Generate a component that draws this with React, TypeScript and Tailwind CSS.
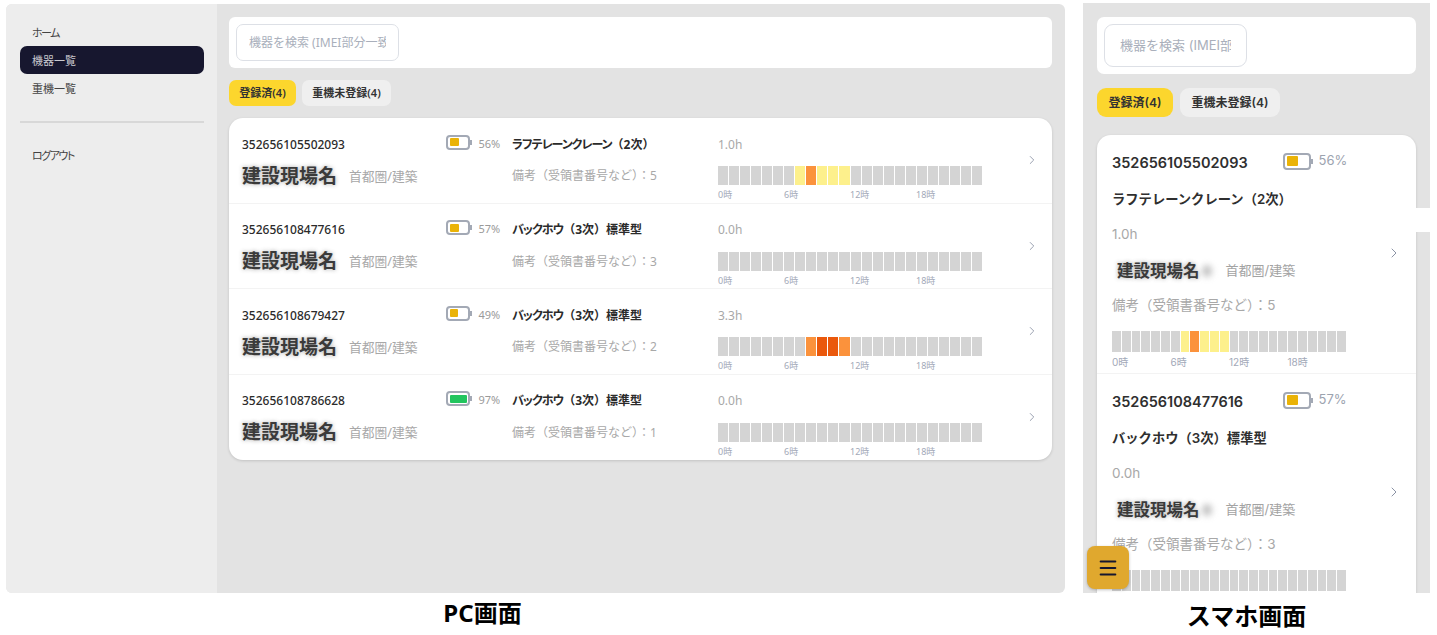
import { ChevronRight, Menu } from "lucide-react";

const PC_FONT = "[font-family:'Noto_Sans','Noto_Sans_CJK_JP',sans-serif]";
const SP_FONT = "[font-family:Inter,'Noto_Sans_CJK_JP',sans-serif]";

type Machine = {
  imei: string;
  battery: number;
  model: string;
  note: number;
  hours: string;
  heat: Record<number, string>;
};

const Y = "bg-[#fdf08c]";
const O = "bg-[#fb923c]";
const D = "bg-[#ea580c]";

const machines: Machine[] = [
  { imei: "352656105502093", battery: 56, model: "ラフテレーンクレーン（2次）", note: 5, hours: "1.0h", heat: { 7: Y, 8: O, 9: Y, 10: Y, 11: Y } },
  { imei: "352656108477616", battery: 57, model: "バックホウ（3次）標準型", note: 3, hours: "0.0h", heat: {} },
  { imei: "352656108679427", battery: 49, model: "バックホウ（3次）標準型", note: 2, hours: "3.3h", heat: { 8: O, 9: D, 10: D, 11: O } },
  { imei: "352656108786628", battery: 97, model: "バックホウ（3次）標準型", note: 1, hours: "0.0h", heat: {} },
];

function Battery({ level, large }: { level: number; large?: boolean }) {
  const fill = level > 90 ? "bg-[#22c55e]" : "bg-[#eab308]";
  return (
    <div className="flex items-center">
      <div className={`rounded-[4px] border-2 border-[#a3a9b5] bg-white p-[1.5px] ${large ? "h-[17px] w-[28px]" : "h-[15px] w-[24px]"}`}>
        <div className={`h-full rounded-[1px] ${fill}`} style={{ width: `${level > 90 ? 100 : level}%` }} />
      </div>
      <div className="h-[5px] w-[1.5px] bg-[#a3a9b5]" />
    </div>
  );
}

function HeatBar({ heat, large, labels = true }: { heat: Record<number, string>; large?: boolean; labels?: boolean }) {
  return (
    <div className={large ? "w-[234px]" : "w-[264px]"}>
      <div className={`grid grid-cols-24 gap-x-[1px] ${large ? "h-[21px]" : "h-[19px]"}`}>
        {Array.from({ length: 24 }, (_, i) => (
          <div key={i} className={heat[i] ?? "bg-[#d4d4d4]"} />
        ))}
      </div>
      {labels && (
        <div className={`grid grid-cols-4 text-[#a3a9b8] ${large ? "mt-[3px] text-[10px] leading-[14px]" : "mt-[4px] text-[9px] leading-[11px]"}`}>
          <span>0時</span>
          <span>6時</span>
          <span>12時</span>
          <span>18時</span>
        </div>
      )}
    </div>
  );
}

function SiteName({ large }: { large?: boolean }) {
  return (
    <span className="flex items-center">
      <span className={`font-bold text-[#3a3a3a] [text-shadow:0_0_4px_rgba(60,60,60,0.45)] ${large ? "text-[16.5px]" : "text-[19px]"}`}>建設現場名</span>
      {large && <span className="ml-[2px] h-[12px] w-[10px] rounded-full bg-[#c4c4c4] blur-[3px]" />}
    </span>
  );
}

// kana in the PC view is set tight, brackets and kanji stay full width
function ModelName({ name }: { name: string }) {
  return (
    <>
      {name.split(/([ァ-ヶー]+)/).map((part, i) =>
        i % 2 === 1 ? (
          <span key={i} className="tracking-[-1px] [font-feature-settings:'palt']">{part}</span>
        ) : (
          <span key={i}>{part}</span>
        ),
      )}
    </>
  );
}

function PcRow({ m, last }: { m: Machine; last: boolean }) {
  return (
    <div className={`flex h-[85.5px] pl-[13px] ${last ? "" : "border-b border-[#f3f3f3]"}`}>
      <div className="w-[204px] pt-[16.5px]">
        <div className="text-[12px] leading-[20px] font-medium text-[#2b2b2b]">{m.imei}</div>
        <div className="mt-[8px] flex items-center gap-[12px] leading-[26px]">
          <SiteName />
          <span className="text-[12.75px] text-[#a8a8a8]">首都圏/建築</span>
        </div>
      </div>
      <div className="flex w-[66px] items-start gap-[7px] pt-[16.5px]">
        <Battery level={m.battery} />
        <span className="text-[11px] leading-[17px] text-[#9a9a9a]">{m.battery}%</span>
      </div>
      <div className="w-[206px] pt-[16.5px]">
        <div className="text-[12px] leading-[20px] font-bold text-[#2b2b2b]">
          <ModelName name={m.model} />
        </div>
        <div className="mt-[11.5px] text-[12px] leading-[20px] text-[#a8a8a8]">備考（受領書番号など）：{m.note}</div>
      </div>
      <div className="w-[264px] pt-[17.5px]">
        <div className="text-[12px] leading-[18px] text-[#a8a8a8]">{m.hours}</div>
        <div className="mt-[12.5px]">
          <HeatBar heat={m.heat} />
        </div>
      </div>
      <div className="flex flex-1 items-center justify-end pr-[13px]">
        <ChevronRight size={14} strokeWidth={1.5} className="text-[#8b93a5]" />
      </div>
    </div>
  );
}

function SpRow({ m, labels }: { m: Machine; labels: boolean }) {
  return (
    <div className="flex h-[239px] shrink-0 border-b border-[#f3f3f3] pt-[18px] pl-[15px]">
      <div className="w-[259px]">
        <div className="flex h-[20px] items-center">
          <span className="w-[171px] text-[14.5px] font-semibold text-[#2f2f2f]">{m.imei}</span>
          <div className="flex -translate-y-[2px] items-center">
            <Battery level={m.battery} large />
            <span className="ml-[6px] text-[13px] text-[#9ca3af]">{m.battery}%</span>
          </div>
        </div>
        <div className="mt-[16px] text-[13.3px] leading-[20px] font-semibold text-[#2f2f2f]">{m.model}</div>
        <div className="mt-[15px] text-[13.5px] leading-[20px] text-[#a8a8a8]">{m.hours}</div>
        <div className="mt-[15px] flex h-[24px] items-center pl-[5px]">
          <SiteName large />
          <span className="ml-[14px] text-[13px] text-[#a3a3a3]">首都圏/建築</span>
        </div>
        <div className="mt-[12px] text-[13.5px] leading-[20px] text-[#a8a8a8]">備考（受領書番号など）：{m.note}</div>
        <div className="mt-[16px]">
          <HeatBar heat={m.heat} large labels={labels} />
        </div>
      </div>
      <div className="flex flex-1 items-center justify-end pr-[14px] pb-[20px]">
        <ChevronRight size={16} strokeWidth={1.5} className="text-[#8b93a5]" />
      </div>
    </div>
  );
}

function Tabs({ large }: { large?: boolean }) {
  const base = `flex items-center justify-center pt-[1px] font-semibold text-[#333] ${large ? "h-[29px] rounded-[9px] text-[12px]" : "h-[26px] rounded-[7px] text-[11px]"}`;
  return (
    <div className={`flex ${large ? "gap-[7px]" : "gap-[6px]"}`}>
      <div className={`${base} bg-[#fcd62d] ${large ? "w-[76px]" : "w-[67px]"}`}>登録済(4)</div>
      <div className={`${base} bg-[#efefef] ${large ? "w-[100px]" : "w-[89px]"}`}>重機未登録(4)</div>
    </div>
  );
}

function Sidebar() {
  const item = "flex h-[28px] items-center px-[12px] pt-[2px]";
  const kana = "tracking-[-1.5px] [font-feature-settings:'palt']";
  return (
    <aside className="w-[211px] shrink-0 bg-[#ededed] pt-[14px] pr-[13px] pl-[14px] text-[11px] text-[#444]">
      <div className={`${item} ${kana}`}>ホーム</div>
      <div className={`${item} rounded-[7px] bg-[#17172f] text-[#c9c9cf]`}>機器一覧</div>
      <div className={item}>重機一覧</div>
      <div className="mt-[19px] mb-[18px] border-t-2 border-[#d8d8d8]" />
      <div className={`${item} ${kana}`}>ログアウト</div>
    </aside>
  );
}

export default function App() {
  return (
    <div className="relative flex h-[635px] w-[1437px] overflow-hidden bg-white">
      <div className={`ml-[6px] w-[1059px] shrink-0 pt-[4px] ${PC_FONT}`}>
        <div className="flex h-[589px] overflow-hidden rounded-[6px] bg-[#e3e3e3]">
          <Sidebar />
          <main className="flex-1 pt-[13px] pr-[13px] pl-[12px]">
            <div className="rounded-[6px] bg-white p-[7px]">
              <div className="flex h-[37px] w-[163px] items-center rounded-[7px] border border-[#dde0e6] px-[12px] text-[12px] text-[#a9afbb]">
                <span className="overflow-hidden whitespace-nowrap">機器を検索 (IMEI部分一致)</span>
              </div>
            </div>
            <div className="mt-[12px]">
              <Tabs />
            </div>
            <div className="mt-[12px] overflow-hidden rounded-[14px] bg-white shadow-[0_1px_3px_rgba(0,0,0,0.15)]">
              {machines.map((m, i) => (
                <PcRow key={m.imei} m={m} last={i === machines.length - 1} />
              ))}
            </div>
          </main>
        </div>
        <div className="mt-[4px] pr-[106px] text-center text-[24px] leading-[32px] font-bold text-black">PC画面</div>
      </div>

      <div className={`ml-[18px] w-[347px] shrink-0 pt-[3px] ${SP_FONT}`}>
        <div className="relative h-[590px] overflow-hidden bg-[#e3e3e3] px-[14px] pt-[14px]">
          <div className="rounded-[7px] bg-white p-[7px]">
            <div className="flex h-[43px] w-[143px] items-center rounded-[9px] border border-[#dde0e6] px-[15px] text-[13px] text-[#a9afbb]">
              <span className="overflow-hidden whitespace-nowrap">機器を検索 (IMEI部分一致)</span>
            </div>
          </div>
          <div className="mt-[14px]">
            <Tabs large />
          </div>
          <div className="mt-[18px] flex h-[500px] flex-col overflow-hidden rounded-t-[14px] bg-white shadow-[0_1px_3px_rgba(0,0,0,0.15)]">
            {machines.slice(0, 2).map((m, i) => (
              <SpRow key={m.imei} m={m} labels={i === 0} />
            ))}
          </div>
          {/* menu button floats over the list */}
          <button className="absolute bottom-[4px] left-[4px] flex h-[43px] w-[42px] items-center justify-center rounded-[8px] bg-[#e0a82e] text-[#17172f] shadow-[0_1px_3px_rgba(0,0,0,0.25)]">
            <Menu size={22} strokeWidth={2.2} />
          </button>
        </div>
        <div className="mt-[6px] pr-[20px] text-center text-[24px] leading-[32px] font-bold text-black [font-family:'Noto_Sans_CJK_JP',sans-serif]">スマホ画面</div>
      </div>

      {/* white notch left at the edge of the phone capture */}
      <div className="absolute top-[208px] left-[1416px] h-[24px] w-[21px] bg-white" />
      <div className="absolute top-0 left-[1430px] h-full w-[7px] bg-white" />
    </div>
  );
}
